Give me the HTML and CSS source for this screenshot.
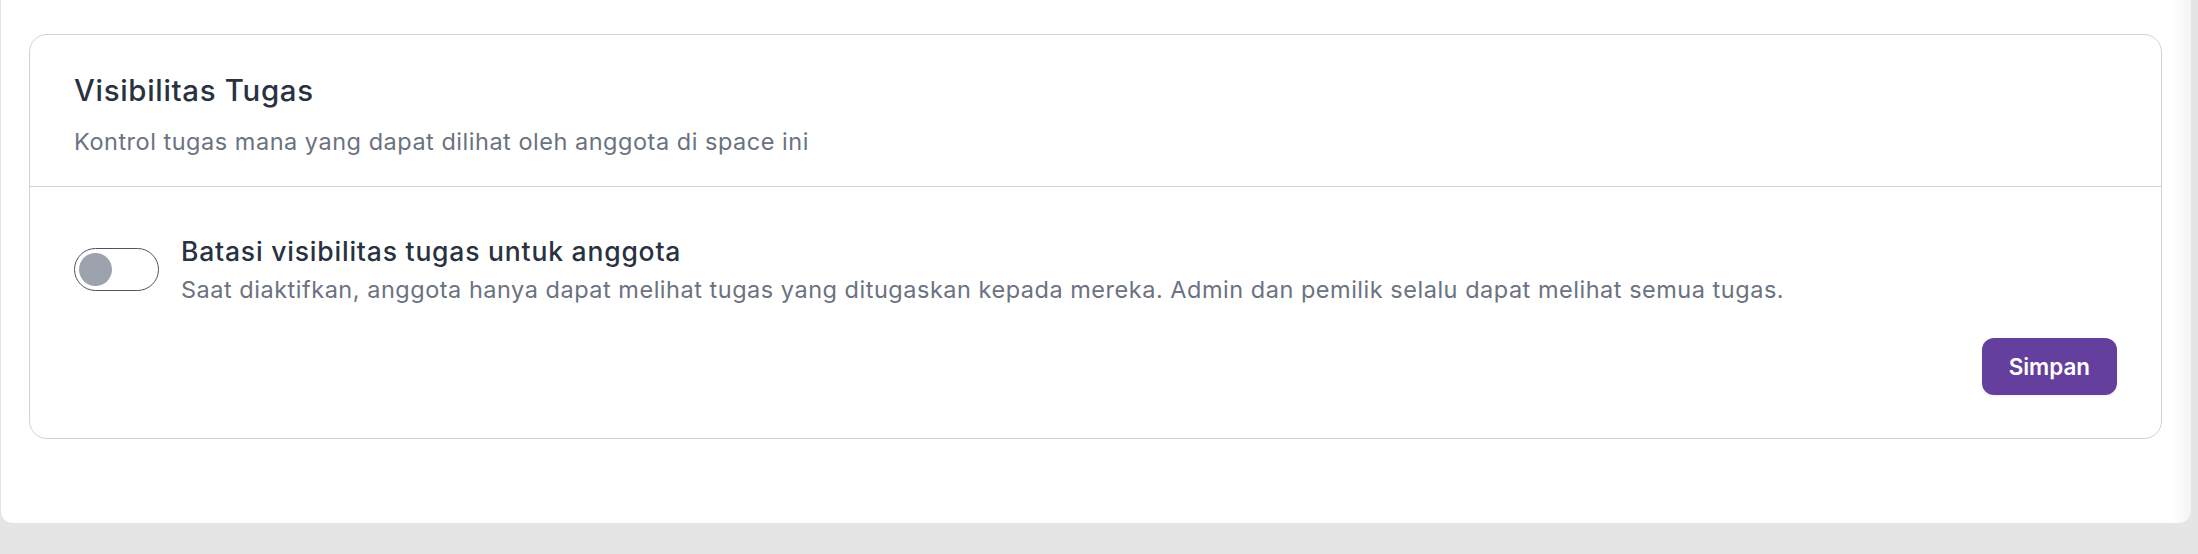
FILE: index.html
```html
<!DOCTYPE html>
<html>
<head>
  <title>Visibilitas Tugas</title>
  <link rel="stylesheet" href="styles.css">
</head>
<body>
  <div class="page">
    <div class="panel">
      <div class="card">
        <div class="card-header">
          <h2 class="card-title">Visibilitas Tugas</h2>
          <p class="card-subtitle">Kontrol tugas mana yang dapat dilihat oleh anggota di space ini</p>
        </div>
        <div class="card-body">
          <div class="setting-row">
            <button class="toggle" type="button" aria-pressed="false">
              <span class="toggle-knob"></span>
            </button>
            <div class="setting-text">
              <div class="setting-label">Batasi visibilitas tugas untuk anggota</div>
              <div class="setting-desc">Saat diaktifkan, anggota hanya dapat melihat tugas yang ditugaskan kepada mereka. Admin dan pemilik selalu dapat melihat semua tugas.</div>
            </div>
          </div>
          <div class="actions">
            <button class="btn-save" type="button">Simpan</button>
          </div>
        </div>
      </div>
    </div>
  </div>
</body>
</html>
```

FILE: styles.css
```css
html, body {
  margin: 0;
  height: 100%;
}

body {
  background: #e5e5e5;
  font-family: Inter, "Noto Sans", "Liberation Sans", sans-serif;
}

.page {
  display: flex;
  padding: 0 7px 30px 1px;
}

.panel {
  flex: 1;
  background: linear-gradient(to right, #ffffff calc(100% - 20px), #f4f4f4);
  border-radius: 0 0 12px 12px;
  padding: 34px 29px 84px 28px;
}

.card {
  background: #fff;
  border: 1px solid #d2d2d6;
  border-radius: 18px;
}

.card-header {
  padding: 36px 44px 27px;
  border-bottom: 1px solid #d2d2d6;
}

.card-title {
  margin: 0;
  font-size: 29.4px;
  line-height: 39px;
  font-weight: 500;
  letter-spacing: 0.024em;
  color: #283241;
}

.card-subtitle {
  margin: 15px 0 0;
  font-size: 23.5px;
  line-height: 33.6px;
  letter-spacing: 0.022em;
  color: #6b7280;
}

.card-body {
  padding: 45.6px 44px 43px;
}

.setting-row {
  display: flex;
  align-items: flex-start;
  gap: 22px;
}

.toggle {
  flex: none;
  margin-top: 15.4px;
  width: 85px;
  height: 43px;
  padding: 0 0 0 4px;
  border: 1px solid #4b5563;
  border-radius: 999px;
  background: #fff;
  display: flex;
  align-items: center;
  cursor: pointer;
}

.toggle-knob {
  width: 33px;
  height: 33px;
  border-radius: 50%;
  background: #9ca3af;
}

.setting-label {
  font-size: 26.5px;
  line-height: 39px;
  font-weight: 500;
  letter-spacing: 0.03em;
  color: #283241;
}

.setting-desc {
  margin-top: 2px;
  font-size: 23.5px;
  line-height: 33.6px;
  letter-spacing: 0.022em;
  color: #6b7280;
}

.actions {
  display: flex;
  justify-content: flex-end;
  margin-top: 30.8px;
}

.btn-save {
  font-family: inherit;
  font-size: 22.4px;
  line-height: 33.6px;
  font-weight: 600;
  color: #fff;
  background: #653f9e;
  border: none;
  border-radius: 12px;
  padding: 12px 27px;
  box-shadow: 0 1px 3px rgba(0, 0, 0, 0.08);
  cursor: pointer;
}
```
